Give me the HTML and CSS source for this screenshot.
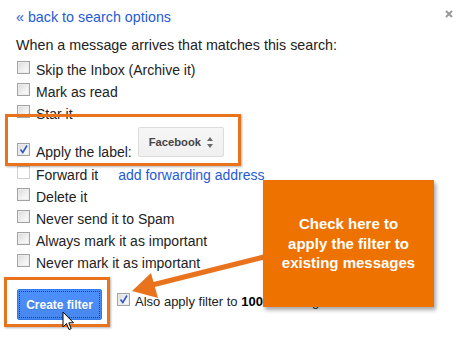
FILE: index.html
```html
<!DOCTYPE html>
<html>
<head>
<meta charset="utf-8">
<link rel="stylesheet" href="styles.css">
</head>
<body>
<div class="dialog">
  <div class="top">
    <a class="back" href="#">« back to search options</a>
    <span class="close"><svg width="8" height="8" viewBox="0 0 8 8"><path d="M1 1L7 7M7 1L1 7" stroke="#9a9a9a" stroke-width="2"/></svg></span>
  </div>
  <p class="lead">When a message arrives that matches this search:</p>
  <ul class="opts">
    <li class="opt"><span class="cb"></span><span>Skip the Inbox (Archive it)</span></li>
    <li class="opt"><span class="cb"></span><span>Mark as read</span></li>
    <li class="opt"><span class="cb"></span><span>Star it</span></li>
    <li class="opt apply">
      <span class="cb checked"><svg width="11" height="11" viewBox="0 0 11 11"><path d="M2.5 5.5L4.8 8.5L9 1.5" fill="none" stroke="#3358c4" stroke-width="1.6"/></svg></span>
      <span class="apply-text">Apply the label:</span>
      <span class="select">Facebook<svg width="6" height="11" viewBox="0 0 6 11"><path d="M0 4L3 0L6 4Z M0 7L3 11L6 7Z" fill="#6a6a6a"/></svg></span>
    </li>
    <li class="opt"><span class="cb dim"></span><span class="fwd">Forward it</span><a class="link" href="#">add forwarding address</a></li>
    <li class="opt"><span class="cb"></span><span>Delete it</span></li>
    <li class="opt"><span class="cb"></span><span>Never send it to Spam</span></li>
    <li class="opt"><span class="cb"></span><span>Always mark it as important</span></li>
    <li class="opt"><span class="cb"></span><span>Never mark it as important</span></li>
  </ul>
  <div class="actions">
    <button class="create">Create filter</button>
    <label class="also"><span class="cb checked"><svg width="11" height="11" viewBox="0 0 11 11"><path d="M2.5 5.5L4.8 8.5L9 1.5" fill="none" stroke="#3358c4" stroke-width="1.6"/></svg></span><span>Also apply filter to <b>100</b> matching conversations.</span></label>
  </div>
</div>

<div class="hl hl-label"></div>
<div class="hl hl-btn"></div>
<svg class="arrow" width="462" height="338" viewBox="0 0 462 338">
  <path d="M268 256L152 285" stroke="#e8731c" stroke-width="5"/>
  <path d="M132 291L151 273L158 298Z" fill="#e8731c"/>
</svg>
<div class="callout">Check here to<br>apply the filter to<br>existing messages</div>
<svg class="cursor" width="14" height="21" viewBox="0 0 14 21">
  <path d="M1 1L1 16L4.5 12.5L7 18.5L9.2 17.6L6.8 11.8L11.5 11.8Z" fill="#fff" stroke="#000" stroke-width="1" stroke-linejoin="round"/>
</svg>
</body>
</html>
```

FILE: styles.css
```css
html, body {
  margin: 0;
  padding: 0;
  background: #fff;
  width: 462px;
  height: 338px;
  overflow: hidden;
  position: relative;
  font-family: "Liberation Sans", Arial, sans-serif;
  font-size: 14px;
  color: #222;
}

.dialog {
  padding: 9px 9px 0 17px;
}

.top {
  display: flex;
  justify-content: space-between;
  align-items: flex-start;
  line-height: 16px;
}

.back {
  color: #1f5bd4;
  text-decoration: none;
  margin-left: -1px;
  font-size: 14.3px;
}

.close {
  display: flex;
  margin-top: 1px;
}

.lead {
  margin: 12px 0 0 -1px;
  line-height: 16px;
  font-size: 14.3px;
}

.opts {
  list-style: none;
  margin: 6px 0 0 0;
  padding: 0;
}

.opt {
  display: flex;
  align-items: center;
  height: 22px;
  line-height: 16px;
}

.cb {
  box-sizing: border-box;
  width: 13px;
  height: 13px;
  border: 1px solid #a3a3a3;
  background: linear-gradient(135deg, #d9d9d9 0%, #f2f2f2 60%, #fbfbfb 100%);
  box-shadow: inset 0 0 0 1px #ececec;
  margin: 0 6px 5px 0;
  display: flex;
  align-items: center;
  justify-content: center;
  flex: none;
}

.cb.dim {
  border-color: #d0d0d0;
  background: #fff;
  box-shadow: none;
}

.cb svg {
  display: block;
}

.opt.apply {
  height: 39px;
  align-items: flex-end;
  padding-bottom: 4px;
  box-sizing: border-box;
}

.opt.apply .cb {
  margin-bottom: 4px;
}

.select {
  align-self: flex-start;
  margin: 2px 0 0 6px;
  box-sizing: border-box;
  height: 30px;
  width: 86px;
  border: 1px solid #dcdcdc;
  border-radius: 2px;
  background: linear-gradient(#f6f6f6, #f0f0f0);
  display: flex;
  align-items: center;
  justify-content: space-between;
  padding: 0 10px 0 10px;
  font-size: 11.2px;
  font-weight: bold;
  color: #444;
}

.select svg {
  display: block;
}

.fwd {
  margin-right: 20px;
}

.link {
  color: #1f5bd4;
  text-decoration: none;
}

.actions {
  display: flex;
  align-items: flex-start;
  margin-top: 15px;
}

.create {
  box-sizing: border-box;
  width: 85px;
  height: 31px;
  border: 1px solid #3079ed;
  border-radius: 2px;
  background: linear-gradient(#4d90fe, #4787ed);
  color: #fff;
  font-family: "Liberation Sans", Arial, sans-serif;
  font-size: 12px;
  font-weight: bold;
  padding: 0;
  outline: 1px dotted #1c3f8a;
  outline-offset: -3px;
  text-shadow: 0 1px rgba(0, 0, 0, 0.15);
}

.also {
  display: flex;
  align-items: flex-start;
  margin: 5px 0 0 15px;
  line-height: 16px;
  font-size: 13px;
  white-space: nowrap;
}

.also .cb {
  margin: -1px 5px 0 0;
}

.also b {
  color: #000;
}

.hl {
  position: absolute;
  box-sizing: border-box;
  border: 3px solid #e8731c;
  box-shadow: 1px 1px 2px rgba(0, 0, 0, 0.3);
}

.hl-label {
  left: 5px;
  top: 114px;
  width: 236px;
  height: 52px;
}

.hl-btn {
  left: 4px;
  top: 277px;
  width: 106px;
  height: 50px;
}

.arrow {
  position: absolute;
  left: 0;
  top: 0;
}

.callout {
  position: absolute;
  left: 263px;
  top: 180px;
  width: 171px;
  height: 127px;
  background: #ee7200;
  box-shadow: 2px 3px 4px rgba(0, 0, 0, 0.35);
  color: #fff;
  font-weight: bold;
  font-size: 15px;
  line-height: 19.5px;
  display: flex;
  align-items: center;
  justify-content: center;
  text-align: center;
}

.cursor {
  position: absolute;
  left: 62px;
  top: 311px;
}
```
